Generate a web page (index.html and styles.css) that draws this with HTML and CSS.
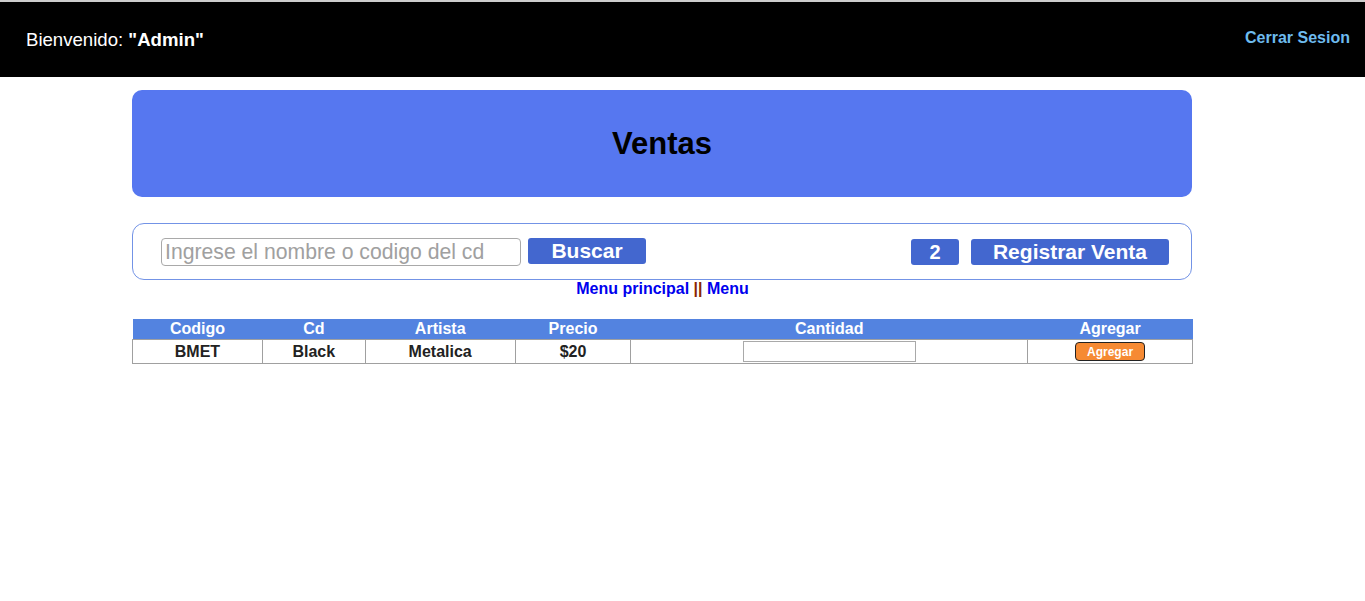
FILE: index.html
```html
<!DOCTYPE html>
<html lang="es">
<head>
    <meta charset="UTF-8">
    <title>Ventas</title>
    <link rel="stylesheet" href="styles.css">
</head>
<body>

<div class="header">
    <span class="welcome">Bienvenido: <b>"Admin"</b></span>
    <a class="logout" href="#">Cerrar Sesion</a>
</div>

<div class="content">
    <div class="title-box">
        <h1>Ventas</h1>
    </div>

    <form class="search-bar" onsubmit="return false;">
        <input class="search-input" type="text" placeholder="Ingrese el nombre o codigo del cd">
        <button class="btn btn-search">Buscar</button>
        <div class="spacer"></div>
        <button class="btn btn-count">2</button>
        <button class="btn btn-register">Registrar Venta</button>
    </form>

    <div class="links">
        <a href="#">Menu principal</a> <span class="sep">||</span> <a href="#">Menu</a>
    </div>

    <table class="cd-table">
        <thead>
            <tr>
                <th class="col-code">Codigo</th>
                <th class="col-cd">Cd</th>
                <th class="col-artist">Artista</th>
                <th class="col-price">Precio</th>
                <th class="col-qty">Cantidad</th>
                <th class="col-add">Agregar</th>
            </tr>
        </thead>
        <tbody>
            <tr>
                <td>BMET</td>
                <td>Black</td>
                <td>Metalica</td>
                <td>$20</td>
                <td><input class="qty-input" type="text"></td>
                <td><button class="btn-add">Agregar</button></td>
            </tr>
        </tbody>
    </table>
</div>

</body>
</html>
```

FILE: styles.css
```css
body {
    margin: 0;
    font-family: "Liberation Sans", Arial, sans-serif;
    background: white;
}

.header {
    display: flex;
    justify-content: space-between;
    align-items: center;
    height: 75px;
    padding: 0 15px 0 26px;
    background: black;
    border-top: 2px solid #cccccc;
}

.welcome {
    color: white;
    font-size: 18.6px;
}

.logout {
    color: #6ebbee;
    font-size: 16px;
    font-weight: bold;
    text-decoration: none;
    margin-bottom: 3px;
}

.content {
    width: 1061px;
    margin: 13px 0 0 132px;
}

.title-box {
    width: 1060px;
    height: 107px;
    display: flex;
    justify-content: center;
    align-items: center;
    background: #5677f0;
    border-radius: 10px;
}

.title-box h1 {
    margin: 0;
    font-size: 31px;
    color: black;
}

.search-bar {
    width: 1060px;
    height: 57px;
    box-sizing: border-box;
    margin: 26px 0 0;
    padding: 0 22px 0 28px;
    display: flex;
    align-items: center;
    border: 1px solid #7393e6;
    border-radius: 12px;
}

.search-input {
    width: 360px;
    height: 28px;
    box-sizing: border-box;
    padding: 0 3px;
    font-family: "Liberation Sans", Arial, sans-serif;
    font-size: 21.2px;
    border: 1px solid #a9a9a9;
    border-radius: 4px;
}

.search-input::placeholder {
    color: #a0a0a0;
}

.spacer {
    flex: 1;
}

.btn {
    height: 26px;
    padding: 0;
    border: none;
    border-radius: 3px;
    background: #4367cf;
    color: white;
    font-family: "Liberation Sans", Arial, sans-serif;
    font-size: 20px;
    font-weight: bold;
    line-height: 26px;
}

.btn-search {
    width: 118px;
    margin-left: 7px;
    margin-top: -2px;
    font-size: 21px;
}

.btn-count {
    width: 48px;
}

.btn-register {
    width: 198px;
    margin-left: 12px;
    font-size: 21px;
}

.links {
    text-align: center;
    font-size: 16px;
    font-weight: bold;
    line-height: 18px;
}

.links a {
    color: #0000ee;
    text-decoration: none;
}

.links .sep {
    color: #8b2500;
}

.cd-table {
    margin-top: 21px;
    width: 1061px;
    border-collapse: collapse;
    font-size: 16px;
}

.cd-table th {
    height: 20px;
    padding: 0;
    background: #5383e0;
    color: white;
    font-weight: bold;
    line-height: 18px;
}

.cd-table td {
    height: 23px;
    padding: 0;
    border: 1px solid #a0a0a0;
    text-align: center;
    font-weight: bold;
    color: #222222;
}

.col-code { width: 130px; }
.col-cd { width: 103px; }
.col-artist { width: 150px; }
.col-price { width: 116px; }
.col-qty { width: 397px; }
.col-add { width: 165px; }

.qty-input {
    display: block;
    margin: 0 auto;
    width: 173px;
    height: 21px;
    box-sizing: border-box;
    border: 1px solid #a9a9a9;
}

.btn-add {
    width: 70px;
    height: 19px;
    padding: 0;
    background: #f68a33;
    color: white;
    border: 1px solid #222222;
    border-radius: 4px;
    font-family: "Liberation Sans", Arial, sans-serif;
    font-size: 12px;
    font-weight: bold;
    vertical-align: middle;
}
```
